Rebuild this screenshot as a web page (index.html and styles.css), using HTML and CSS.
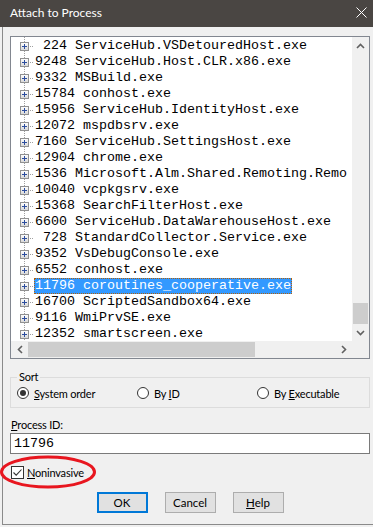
FILE: index.html
```html
<!DOCTYPE html>
<html lang="en">
<head>
  <meta charset="UTF-8" />
  <meta name="viewport" content="width=device-width, initial-scale=1.0"/>
  <title>Attach to Process</title>
  <link rel="stylesheet" href="styles.css">
</head>
<body>

  <div class="titlebar">
    <span class="title">Attach to Process</span>
    <svg class="close" width="11" height="11" viewBox="0 0 11 11">
      <path d="M0.5 0.5 L10.5 10.5 M10.5 0.5 L0.5 10.5" stroke="#fff" stroke-width="1" fill="none"/>
    </svg>
  </div>

  <div class="dialog">

    <div class="proc-list">
      <div class="tree">
        <div class="row"><span class="expander"></span><span class="stub"></span><span class="label"> 224 ServiceHub.VSDetouredHost.exe</span></div>
        <div class="row"><span class="expander"></span><span class="stub"></span><span class="label">9248 ServiceHub.Host.CLR.x86.exe</span></div>
        <div class="row"><span class="expander"></span><span class="stub"></span><span class="label">9332 MSBuild.exe</span></div>
        <div class="row"><span class="expander"></span><span class="stub"></span><span class="label">15784 conhost.exe</span></div>
        <div class="row"><span class="expander"></span><span class="stub"></span><span class="label">15956 ServiceHub.IdentityHost.exe</span></div>
        <div class="row"><span class="expander"></span><span class="stub"></span><span class="label">12072 mspdbsrv.exe</span></div>
        <div class="row"><span class="expander"></span><span class="stub"></span><span class="label">7160 ServiceHub.SettingsHost.exe</span></div>
        <div class="row"><span class="expander"></span><span class="stub"></span><span class="label">12904 chrome.exe</span></div>
        <div class="row"><span class="expander"></span><span class="stub"></span><span class="label">1536 Microsoft.Alm.Shared.Remoting.Remo</span></div>
        <div class="row"><span class="expander"></span><span class="stub"></span><span class="label">10040 vcpkgsrv.exe</span></div>
        <div class="row"><span class="expander"></span><span class="stub"></span><span class="label">15368 SearchFilterHost.exe</span></div>
        <div class="row"><span class="expander"></span><span class="stub"></span><span class="label">6600 ServiceHub.DataWarehouseHost.exe</span></div>
        <div class="row"><span class="expander"></span><span class="stub"></span><span class="label"> 728 StandardCollector.Service.exe</span></div>
        <div class="row"><span class="expander"></span><span class="stub"></span><span class="label">9352 VsDebugConsole.exe</span></div>
        <div class="row"><span class="expander"></span><span class="stub"></span><span class="label">6552 conhost.exe</span></div>
        <div class="row"><span class="expander"></span><span class="stub"></span><span class="label selected">11796 coroutines_cooperative.exe</span></div>
        <div class="row"><span class="expander"></span><span class="stub"></span><span class="label">16700 ScriptedSandbox64.exe</span></div>
        <div class="row"><span class="expander"></span><span class="stub"></span><span class="label">9116 WmiPrvSE.exe</span></div>
        <div class="row"><span class="expander"></span><span class="stub"></span><span class="label">12352 smartscreen.exe</span></div>
      </div>

      <div class="vscroll">
        <div class="sb-btn">
          <svg width="9" height="6" viewBox="0 0 9 6"><path d="M1 5 L4.5 1.5 L8 5" fill="none" stroke="#606060" stroke-width="1.6"/></svg>
        </div>
        <div class="v-track"><div class="v-thumb"></div></div>
        <div class="sb-btn">
          <svg width="9" height="6" viewBox="0 0 9 6"><path d="M1 1 L4.5 4.5 L8 1" fill="none" stroke="#606060" stroke-width="1.6"/></svg>
        </div>
      </div>

      <div class="hscroll">
        <div class="sb-btn">
          <svg width="6" height="9" viewBox="0 0 6 9"><path d="M5 1 L1.5 4.5 L5 8" fill="none" stroke="#606060" stroke-width="1.6"/></svg>
        </div>
        <div class="h-track"><div class="h-thumb"></div></div>
        <div class="sb-btn">
          <svg width="6" height="9" viewBox="0 0 6 9"><path d="M1 1 L4.5 4.5 L1 8" fill="none" stroke="#606060" stroke-width="1.6"/></svg>
        </div>
      </div>

      <div class="corner"></div>
    </div>

    <fieldset class="sort-group">
      <legend>Sort</legend>
      <div class="sort-options">
        <label class="radio"><span class="radio-dot checked"></span><span><u>S</u>ystem order</span></label>
        <label class="radio"><span class="radio-dot"></span><span>By <u>I</u>D</span></label>
        <label class="radio"><span class="radio-dot"></span><span>By <u>E</u>xecutable</span></label>
      </div>
    </fieldset>

    <div class="field-label"><u>P</u>rocess ID:</div>
    <div class="pid-box">11796</div>

    <div class="check-row">
      <span class="checkbox">
        <svg width="11" height="11" viewBox="0 0 11 11"><path d="M1.5 5.5 L4.2 8.2 L9.5 2.5" fill="none" stroke="#333" stroke-width="1.1"/></svg>
      </span>
      <span><u>N</u>oninvasive</span>
      <svg class="highlight-ring" width="100" height="36" viewBox="0 0 100 36">
        <ellipse cx="48" cy="17" rx="46.5" ry="15" fill="none" stroke="#e8161f" stroke-width="3"/>
      </svg>
    </div>

    <div class="buttons">
      <button class="btn default">OK</button>
      <button class="btn">Cancel</button>
      <button class="btn"><u>H</u>elp</button>
    </div>

  </div>

</body>
</html>
```

FILE: styles.css
```css
body {
  margin: 0;
  background: #f0f0f0;
  font-family: Lato, "Noto Sans", sans-serif;
  font-size: 11px;
  letter-spacing: -0.2px;
  color: #000;
}

.titlebar {
  height: 27px;
  background: #4a4643;
  color: #fff;
  display: flex;
  justify-content: space-between;
  align-items: flex-start;
  padding: 0 6px 0 10px;
  letter-spacing: 0;
}

.title {
  font-size: 12px;
  line-height: 25px;
}

.close {
  margin-top: 7px;
}

.dialog {
  margin-left: 2px;
  border-left: 1px solid #8a8a8a;
  border-bottom: 1px solid #8a8a8a;
  padding: 9px 3px 11px 7px;
  position: relative;
}

/* process list */

.proc-list {
  border: 1px solid #828790;
  background: #fff;
  display: grid;
  grid-template-columns: 1fr 17px;
  grid-template-rows: 304px 17px;
  overflow: hidden;
}

.tree {
  overflow: hidden;
  padding-top: 1px;
  font-family: "Liberation Mono", monospace;
  font-size: 13.33px;
  letter-spacing: 0;
  background-image: linear-gradient(#a0a0a0 50%, transparent 50%);
  background-size: 1px 2px;
  background-repeat: repeat-y;
  background-position: 13px 0;
}

.row {
  height: 16px;
  display: flex;
  align-items: center;
  padding-left: 9px;
  white-space: pre;
}

.expander {
  flex: none;
  width: 9px;
  height: 9px;
  box-sizing: border-box;
  border: 1px solid #919191;
  background: linear-gradient(#fdfdfd, #d9d9d9);
  position: relative;
}

.expander::before,
.expander::after {
  content: "";
  position: absolute;
  background: #2c4d9e;
}

.expander::before {
  left: 1px;
  top: 3px;
  width: 5px;
  height: 1px;
}

.expander::after {
  left: 3px;
  top: 1px;
  width: 1px;
  height: 5px;
}

.stub {
  flex: none;
  width: 4px;
  height: 1px;
  margin-right: 1px;
  background: linear-gradient(90deg, transparent 50%, #a0a0a0 50%);
  background-size: 2px 1px;
}

.label {
  height: 16px;
  line-height: 16px;
  padding: 0 1px;
  box-sizing: border-box;
}

.label.selected {
  background: #3399ff;
  color: #fff;
  border: 1px dotted #b0600a;
  line-height: 14px;
  padding: 0;
}

.vscroll,
.hscroll,
.corner {
  background: #f0f0f0;
}

.vscroll {
  display: flex;
  flex-direction: column;
}

.hscroll {
  display: flex;
}

.sb-btn {
  flex: none;
  width: 17px;
  height: 17px;
  display: flex;
  align-items: center;
  justify-content: center;
}

.v-track {
  flex: 1;
  display: flex;
  flex-direction: column;
  justify-content: flex-end;
}

.v-thumb {
  height: 21px;
  margin: 0 1px;
  background: #cdcdcd;
}

.h-track {
  flex: 1;
  display: flex;
  align-items: center;
}

.h-thumb {
  width: 227px;
  height: 15px;
  background: #cdcdcd;
}

/* sort group */

.sort-group {
  margin: 10px 0 0;
  padding: 0 6px 6px;
  border: 1px solid #dcdcdc;
}

.sort-group legend {
  padding: 0 2px;
  line-height: 16px;
}

.sort-options {
  display: grid;
  grid-template-columns: 120px 120px 1fr;
  height: 16px;
}

.radio {
  display: flex;
  align-items: center;
  gap: 5px;
}

.radio-dot {
  width: 12px;
  height: 12px;
  box-sizing: border-box;
  border: 1px solid #333;
  border-radius: 50%;
  background: #fff;
  display: flex;
  align-items: center;
  justify-content: center;
}

.radio-dot.checked::after {
  content: "";
  width: 6px;
  height: 6px;
  border-radius: 50%;
  background: #333;
}

/* process id */

.field-label {
  margin-top: 9px;
  line-height: 16px;
  padding-left: 1px;
}

.pid-box {
  height: 21px;
  box-sizing: border-box;
  border: 1px solid #7a7a7a;
  background: #fff;
  font-family: "Liberation Mono", monospace;
  font-size: 13.33px;
  letter-spacing: 0;
  line-height: 19px;
  padding-left: 3px;
}

.check-row {
  margin-top: 10px;
  height: 16px;
  display: flex;
  align-items: center;
  gap: 3px;
  padding-left: 1px;
  position: relative;
}

.checkbox {
  width: 13px;
  height: 13px;
  box-sizing: border-box;
  border: 1px solid #333;
  background: #fff;
  display: flex;
}

.highlight-ring {
  position: absolute;
  left: -10px;
  top: -9px;
}

/* buttons */

.buttons {
  margin-top: 12px;
  display: flex;
  justify-content: center;
  gap: 17px;
}

.btn {
  width: 51px;
  height: 21px;
  font-family: inherit;
  font-size: 11.5px;
  letter-spacing: 0;
  background: #e1e1e1;
  border: 1px solid #adadad;
  padding: 0;
  color: #000;
}

.btn.default {
  border: 2px solid #0078d7;
}
```
